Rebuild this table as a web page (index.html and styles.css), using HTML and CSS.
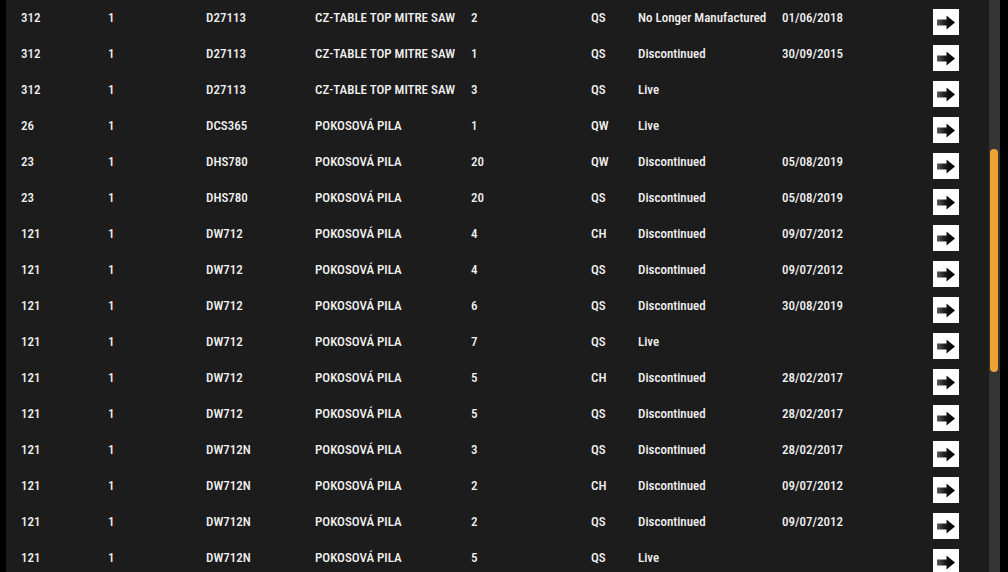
FILE: index.html
```html
<!DOCTYPE html>
<html lang="cs">
<head>
<meta charset="utf-8">
<title>Parts list</title>
<link rel="stylesheet" href="styles.css">
</head>
<body>
<svg width="0" height="0" class="defs" aria-hidden="true">
  <defs>
    <linearGradient id="ag" x1="0" y1="0" x2="1" y2="0">
      <stop offset="0" stop-color="#5a5a5a"/>
      <stop offset="0.45" stop-color="#1a1a1a"/>
      <stop offset="1" stop-color="#000"/>
    </linearGradient>
    <symbol id="arrow" viewBox="0 0 26 26">
      <path d="M4 10.5h9.5V6.5L22 13.5l-8.5 7v-4H4z" fill="url(#ag)"/>
    </symbol>
  </defs>
</svg>
<div class="page">
  <div class="edge-left"></div>
  <main class="list">
    <div class="row"><span>312</span><span>1</span><span>D27113</span><span>CZ-TABLE TOP MITRE SAW</span><span>2</span><span>QS</span><span>No Longer Manufactured</span><span>01/06/2018</span><a class="go"><svg><use href="#arrow"/></svg></a></div>
    <div class="row"><span>312</span><span>1</span><span>D27113</span><span>CZ-TABLE TOP MITRE SAW</span><span>1</span><span>QS</span><span>Discontinued</span><span>30/09/2015</span><a class="go"><svg><use href="#arrow"/></svg></a></div>
    <div class="row"><span>312</span><span>1</span><span>D27113</span><span>CZ-TABLE TOP MITRE SAW</span><span>3</span><span>QS</span><span>Live</span><span></span><a class="go"><svg><use href="#arrow"/></svg></a></div>
    <div class="row"><span>26</span><span>1</span><span>DCS365</span><span>POKOSOVÁ PILA</span><span>1</span><span>QW</span><span>Live</span><span></span><a class="go"><svg><use href="#arrow"/></svg></a></div>
    <div class="row"><span>23</span><span>1</span><span>DHS780</span><span>POKOSOVÁ PILA</span><span>20</span><span>QW</span><span>Discontinued</span><span>05/08/2019</span><a class="go"><svg><use href="#arrow"/></svg></a></div>
    <div class="row"><span>23</span><span>1</span><span>DHS780</span><span>POKOSOVÁ PILA</span><span>20</span><span>QS</span><span>Discontinued</span><span>05/08/2019</span><a class="go"><svg><use href="#arrow"/></svg></a></div>
    <div class="row"><span>121</span><span>1</span><span>DW712</span><span>POKOSOVÁ PILA</span><span>4</span><span>CH</span><span>Discontinued</span><span>09/07/2012</span><a class="go"><svg><use href="#arrow"/></svg></a></div>
    <div class="row"><span>121</span><span>1</span><span>DW712</span><span>POKOSOVÁ PILA</span><span>4</span><span>QS</span><span>Discontinued</span><span>09/07/2012</span><a class="go"><svg><use href="#arrow"/></svg></a></div>
    <div class="row"><span>121</span><span>1</span><span>DW712</span><span>POKOSOVÁ PILA</span><span>6</span><span>QS</span><span>Discontinued</span><span>30/08/2019</span><a class="go"><svg><use href="#arrow"/></svg></a></div>
    <div class="row"><span>121</span><span>1</span><span>DW712</span><span>POKOSOVÁ PILA</span><span>7</span><span>QS</span><span>Live</span><span></span><a class="go"><svg><use href="#arrow"/></svg></a></div>
    <div class="row"><span>121</span><span>1</span><span>DW712</span><span>POKOSOVÁ PILA</span><span>5</span><span>CH</span><span>Discontinued</span><span>28/02/2017</span><a class="go"><svg><use href="#arrow"/></svg></a></div>
    <div class="row"><span>121</span><span>1</span><span>DW712</span><span>POKOSOVÁ PILA</span><span>5</span><span>QS</span><span>Discontinued</span><span>28/02/2017</span><a class="go"><svg><use href="#arrow"/></svg></a></div>
    <div class="row"><span>121</span><span>1</span><span>DW712N</span><span>POKOSOVÁ PILA</span><span>3</span><span>QS</span><span>Discontinued</span><span>28/02/2017</span><a class="go"><svg><use href="#arrow"/></svg></a></div>
    <div class="row"><span>121</span><span>1</span><span>DW712N</span><span>POKOSOVÁ PILA</span><span>2</span><span>CH</span><span>Discontinued</span><span>09/07/2012</span><a class="go"><svg><use href="#arrow"/></svg></a></div>
    <div class="row"><span>121</span><span>1</span><span>DW712N</span><span>POKOSOVÁ PILA</span><span>2</span><span>QS</span><span>Discontinued</span><span>09/07/2012</span><a class="go"><svg><use href="#arrow"/></svg></a></div>
    <div class="row"><span>121</span><span>1</span><span>DW712N</span><span>POKOSOVÁ PILA</span><span>5</span><span>QS</span><span>Live</span><span></span><a class="go"><svg><use href="#arrow"/></svg></a></div>
  </main>
  <div class="scrollbar"><div class="thumb"></div></div>
  <div class="edge-right"></div>
</div>
</body>
</html>
```

FILE: styles.css
```css
html, body {
  margin: 0;
  padding: 0;
  height: 572px;
  overflow: hidden;
  background: #1c1c1c;
}
.defs {
  position: absolute;
  width: 0;
  height: 0;
}
.page {
  display: flex;
  height: 572px;
  overflow: hidden;
}
.edge-left {
  width: 6px;
  flex: none;
  background: #000;
}
.edge-right {
  width: 8px;
  flex: none;
  background: #000;
}
.list {
  flex: 1;
  display: flex;
  flex-direction: column;
  background: #1c1c1c;
  min-width: 0;
}
.row {
  flex: none;
  height: 36px;
  display: grid;
  grid-template-columns: 87px 98px 109px 156px 120px 47px 144px 151px 26px;
  align-items: start;
  padding-left: 15px;
  font-family: Roboto, "Noto Sans", sans-serif;
  font-weight: 500;
  font-stretch: condensed;
  font-size: 13px;
  line-height: 16px;
  color: #f2f2f2;
}
.row span {
  padding-top: 10px;
  white-space: nowrap;
}
.go {
  display: block;
  width: 26px;
  height: 26px;
  margin-top: 9px;
  background: #fff;
}
.go svg {
  display: block;
  width: 26px;
  height: 26px;
}
.scrollbar {
  width: 11px;
  flex: none;
  background: #343434;
  padding-top: 149px;
  box-sizing: border-box;
}
.thumb {
  margin-left: 1px;
  width: 8px;
  height: 223px;
  border-radius: 4px;
  background: #eda233;
}
```
